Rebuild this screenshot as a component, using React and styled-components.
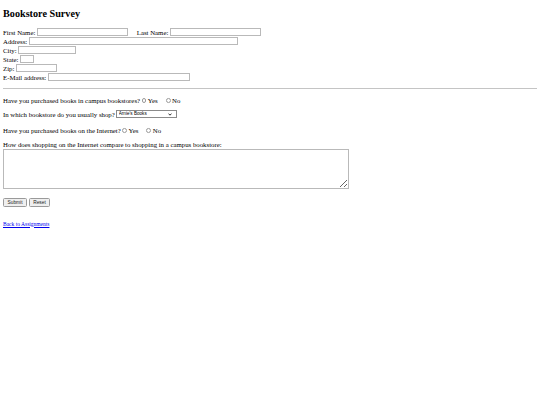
import React from 'react';
import styled, { createGlobalStyle } from 'styled-components';

const GlobalStyle = createGlobalStyle`
  html, body {
    margin: 0;
    padding: 0;
    background: #ffffff;
  }
  body {
    font-family: "Liberation Serif", "Times New Roman", serif;
    font-size: 6.8px;
    color: #000000;
  }
`;

const Page = styled.div`
  padding: 8px 3px 0 3px;
`;

const Title = styled.h1`
  margin: 0;
  font-size: 10.2px;
  line-height: 12px;
  font-weight: bold;
`;

const Fields = styled.div`
  margin-top: 7.5px;
`;

const Row = styled.div`
  display: flex;
  align-items: center;
  height: 9px;
  margin-top: ${p => p.$top || 0}px;
  white-space: nowrap;
`;

const Label = styled.span`
  margin-right: 1.5px;
  margin-left: ${p => p.$left || 0}px;
`;

const TextBox = styled.input`
  box-sizing: border-box;
  width: ${p => p.$w}px;
  height: 8px;
  margin: 0;
  padding: 0;
  border: 1px solid #b9b9b9;
  border-radius: 0;
  background: #fff;
`;

const Rule = styled.hr`
  margin: 6.5px 0 0 0;
  border: none;
  height: 1px;
  background: #c4c4c4;
`;

const Radio = styled.input.attrs({ type: 'radio' })`
  appearance: none;
  box-sizing: border-box;
  width: 4.8px;
  height: 4.8px;
  margin: 0.8px 1.5px 0 ${p => p.$left || 1.5}px;
  border: 0.7px solid #9a9a9a;
  border-radius: 50%;
  background: #fff;
`;

const SelectWrap = styled.span`
  position: relative;
  display: inline-flex;
  margin-left: 1.5px;
`;

const Select = styled.select`
  appearance: none;
  box-sizing: border-box;
  width: 61px;
  height: 7.5px;
  margin: 0;
  padding: 0 0 0 1.5px;
  font-family: "Liberation Sans", Arial, sans-serif;
  font-size: 4.6px;
  line-height: 6px;
  border: 0.7px solid #8a8a8a;
  border-radius: 0;
  background: #fff;
  color: #000;
`;

const Chevron = styled.svg`
  position: absolute;
  right: 5px;
  top: 2.3px;
  width: 4px;
  height: 3px;
  pointer-events: none;
`;

const Question = styled.div`
  margin-top: 5px;
  line-height: 9px;
`;

const Comments = styled.textarea`
  display: block;
  box-sizing: border-box;
  width: 346px;
  height: 40px;
  margin: 0;
  padding: 0;
  border: 1px solid #b9b9b9;
  border-radius: 0;
  resize: both;
`;

const Buttons = styled.div`
  display: flex;
  gap: 2px;
  margin-top: 9px;
`;

const Button = styled.button`
  box-sizing: border-box;
  width: ${p => p.$w}px;
  height: 9px;
  padding: 0;
  font-family: "Liberation Sans", Arial, sans-serif;
  font-size: 4.8px;
  line-height: 7px;
  color: #222;
  background: #efefef;
  border: 0.7px solid #9a9a9a;
  border-radius: 1.5px;
`;

const BackLink = styled.a`
  display: block;
  margin-top: 14px;
  font-size: 5.5px;
  line-height: 7px;
  color: #0000ee;
  text-decoration: underline;
`;

const App = () => {
  return (
    <>
      <GlobalStyle />
      <Page>
        <Title>Bookstore Survey</Title>
        <Fields>
          <Row>
            <Label>First Name:</Label>
            <TextBox $w={91} />
            <Label $left={9}>Last Name:</Label>
            <TextBox $w={91} />
          </Row>
          <Row>
            <Label>Address:</Label>
            <TextBox $w={209} />
          </Row>
          <Row>
            <Label>City:</Label>
            <TextBox $w={58} />
          </Row>
          <Row>
            <Label>State:</Label>
            <TextBox $w={14} />
          </Row>
          <Row>
            <Label>Zip:</Label>
            <TextBox $w={41} />
          </Row>
          <Row>
            <Label>E-Mail address:</Label>
            <TextBox $w={142} />
          </Row>
        </Fields>
        <Rule />
        <Row $top={6.5}>
          <span>Have you purchased books in campus bookstores?</span>
          <Radio name="campus" $left={1.5} />
          <span>Yes</span>
          <Radio name="campus" $left={8} />
          <span>No</span>
        </Row>
        <Row $top={5}>
          <span>In which bookstore do you usually shop?</span>
          <SelectWrap>
            <Select defaultValue="arnie">
              <option value="arnie">Arnie's Books</option>
              <option value="campus">Campus Bookstore</option>
            </Select>
            <Chevron viewBox="0 0 8 6">
              <path d="M1 1.2 L4 4.4 L7 1.2" fill="none" stroke="#000" strokeWidth="1.6" />
            </Chevron>
          </SelectWrap>
        </Row>
        <Row $top={7}>
          <span>Have you purchased books on the Internet?</span>
          <Radio name="internet" $left={1.5} />
          <span>Yes</span>
          <Radio name="internet" $left={8} />
          <span>No</span>
        </Row>
        <Question>How does shopping on the Internet compare to shopping in a campus bookstore:</Question>
        <Comments />
        <Buttons>
          <Button $w={24}>Submit</Button>
          <Button $w={21}>Reset</Button>
        </Buttons>
        <BackLink href="#">Back to Assignments</BackLink>
      </Page>
    </>
  );
};

export default App;
